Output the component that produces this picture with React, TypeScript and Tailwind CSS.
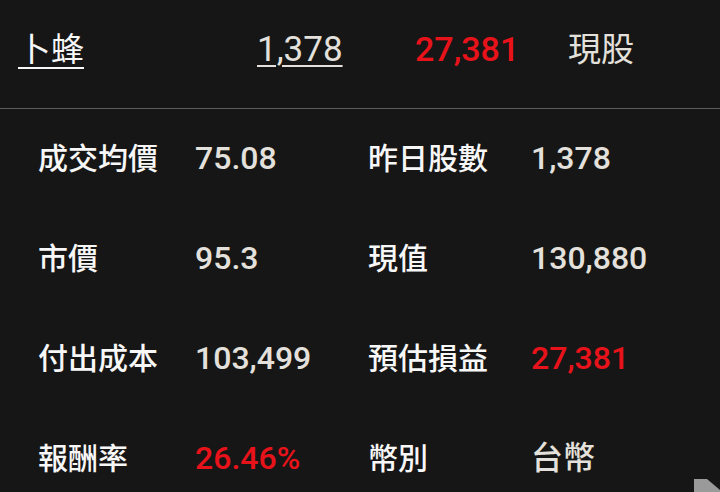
import React from "react";

type Cell = { label: string; value: string; red?: boolean };

const rows: [Cell, Cell][] = [
  [
    { label: "成交均價", value: "75.08" },
    { label: "昨日股數", value: "1,378" },
  ],
  [
    { label: "市價", value: "95.3" },
    { label: "現值", value: "130,880" },
  ],
  [
    { label: "付出成本", value: "103,499" },
    { label: "預估損益", value: "27,381", red: true },
  ],
  [
    { label: "報酬率", value: "26.46%", red: true },
    { label: "幣別", value: "台幣" },
  ],
];

const font = {
  fontFamily: 'Roboto, "Noto Sans CJK TC", "Noto Sans", sans-serif',
};

export default function App() {
  return (
    <div
      className="relative h-[492px] w-[720px] overflow-hidden bg-[#161616]"
      style={font}
    >
      {/* header */}
      <div className="flex h-[108px] items-center pl-[18px] pb-[10px] leading-none">
        <span className="w-[239px] text-[33px] text-[#f7f7f7] underline decoration-2 underline-offset-[6px]">
          卜蜂
        </span>
        <span className="w-[158px] text-[35px] text-[#e4e1dc] underline decoration-2 underline-offset-[4px]">
          1,378
        </span>
        <span className="w-[153px] text-[34px] font-medium text-[#e8131a]">27,381</span>
        <span className="text-[33px] text-[#e4e1dc]">現股</span>
      </div>
      <div className="h-px bg-[#5c5c5c]" />

      {/* details */}
      <div className="flex flex-col">
        {rows.map((r, i) => (
          <div key={i} className="flex h-[100px] items-center pl-[38px] pb-[2px]">
            <span className="w-[157px] text-[30px] font-medium text-[#f7f7f7]">
              {r[0].label}
            </span>
            <span
              className={`w-[173px] text-[32px] font-medium ${
                r[0].red ? "text-[#e8131a]" : "text-[#e4e1dc]"
              }`}
            >
              {r[0].value}
            </span>
            <span className="w-[163px] text-[30px] font-medium text-[#f7f7f7]">
              {r[1].label}
            </span>
            <span
              className={`text-[32px] font-medium ${
                r[1].red ? "text-[#e8131a]" : "text-[#e4e1dc]"
              }`}
            >
              {r[1].value}
            </span>
          </div>
        ))}
      </div>

      {/* corner handle */}
      <svg
        className="absolute bottom-0 right-0"
        width="26"
        height="13"
        viewBox="0 0 26 13"
      >
        <polygon points="0,0 13,0 26,11 26,13 0,13" fill="#9a9a9a" />
      </svg>
    </div>
  );
}
